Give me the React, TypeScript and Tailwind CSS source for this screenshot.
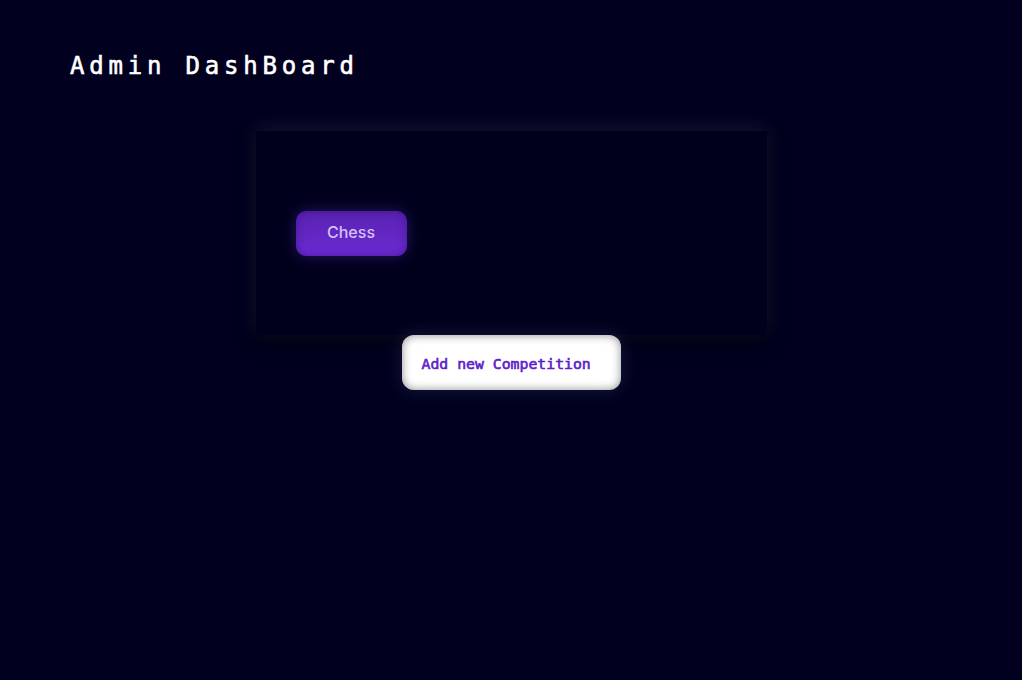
import React from "react";

const competitions = ["Chess"];

export default function App() {
  return (
    <div className="min-h-screen w-full bg-[#01011f] pt-[50px]">
      <h1 className="px-[70px] text-2xl font-normal tracking-[0.2em] text-white [-webkit-text-stroke:0.6px_white] [font-family:'DejaVu_Sans_Mono',monospace]">
        Admin DashBoard
      </h1>

      <div className="mt-[49px] flex flex-col items-center">
        <div className="flex h-[204px] w-1/2 items-center gap-4 bg-[#00001d] px-10 shadow-[0_-4px_18px_rgba(160,160,210,0.12),0_6px_16px_rgba(0,0,0,0.6)]">
          {competitions.map((c) => (
            <button
              key={c}
              className="h-[45px] w-[111px] rounded-[10px] bg-gradient-to-b from-[#5a22b2] to-[#6b2bd2] pb-[2px] text-base font-medium text-[#d2c2f8] shadow-[0_0_14px_rgba(110,60,220,0.35),inset_0_0_8px_rgba(40,10,110,0.5)] [font-family:Inter,sans-serif]"
            >
              {c}
            </button>
          ))}
        </div>
        <button className="h-[55px] w-[219px] rounded-xl bg-white px-5 pt-[3px] text-left text-[14.8px] font-normal text-[#5b21c9] [-webkit-text-stroke:0.6px_#5b21c9] shadow-[inset_0_0_10px_rgba(0,0,0,0.45),0_0_18px_rgba(140,140,220,0.18)] [font-family:'DejaVu_Sans_Mono',monospace]">
          Add new Competition
        </button>
      </div>
    </div>
  );
}
